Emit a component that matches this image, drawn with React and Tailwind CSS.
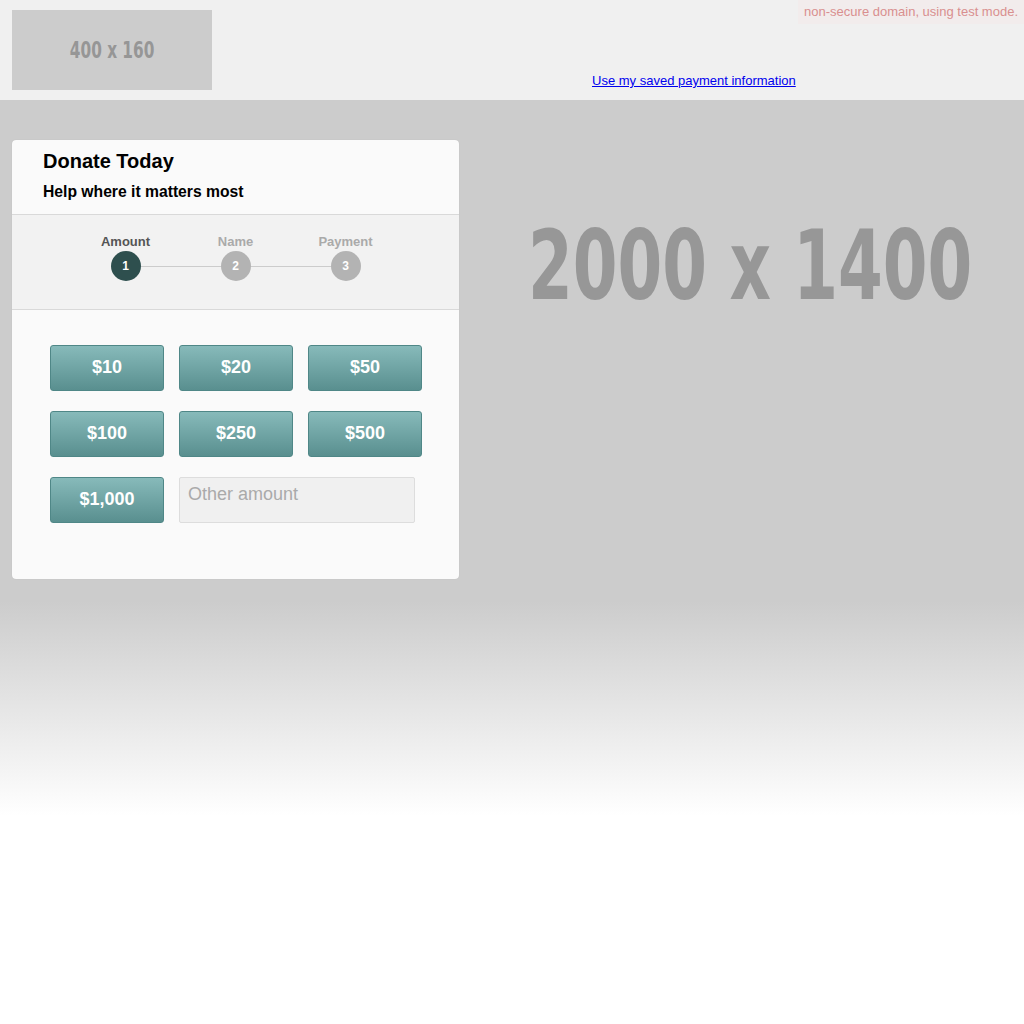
import { useState } from 'react'

const amounts = ['$10', '$20', '$50', '$100', '$250', '$500', '$1,000']
const steps = ['Amount', 'Name', 'Payment']

export default function App() {
  const [other, setOther] = useState('')
  const step = 0

  return (
    <div className="min-h-screen bg-white font-['Liberation_Sans',Arial,sans-serif]">

      {/* Header */}
      <header className="relative h-[100px] bg-[#f0f0f0] flex items-start">
        <div className="ml-3 mt-[10px] w-[200px] h-[80px] bg-[#cccccc] flex items-center justify-center">
          <span className="inline-block scale-x-[0.74] whitespace-nowrap text-[23px] leading-[28px] font-bold text-[#969696] font-['DejaVu_Sans_Condensed',sans-serif]">400 x 160</span>
        </div>
        <a href="#" className="ml-[380px] mt-[71px] text-[13px] text-[#0000ee] underline">
          Use my saved payment information
        </a>
        <div className="absolute top-0 right-0 px-[6px] py-[4px] bg-[#f2ecec] text-[13px] leading-[16px] text-[#d98f8f]">
          non-secure domain, using test mode.
        </div>
      </header>

      {/* Hero */}
      <main className="h-[716px] bg-[linear-gradient(to_bottom,#cccccc_0%,#cccccc_70%,#ffffff_100%)] flex items-start pt-10 pl-3">
        <div className="w-[447px] shrink-0 bg-[#fafafa] rounded-[4px] shadow-[0_0_1px_rgba(0,0,0,0.15)]">
          <div className="pl-[31px] pt-[9px] pb-[12px] border-b border-[#d9d9d9]">
            <h1 className="text-[20px] leading-[24px] font-bold text-black">Donate Today</h1>
            <h2 className="mt-[9px] text-[15.7px] leading-[20px] font-bold text-black">Help where it matters most</h2>
          </div>

          <div className="bg-[#f2f2f2] border-b border-[#d9d9d9] pt-[19px] pb-[28px]">
            <div className="relative w-[330px] mx-auto grid grid-cols-3">
              <div className="absolute left-[55px] right-[55px] top-[32px] h-px bg-[#cccccc]" />
              {steps.map((s, i) => (
                <div key={s} className="relative flex flex-col items-center">
                  <span className={`text-[13px] leading-[15px] font-bold ${i === step ? 'text-[#555555]' : 'text-[#aaaaaa]'}`}>{s}</span>
                  <span className={`mt-[2px] w-[30px] h-[30px] rounded-full flex items-center justify-center text-[12px] font-bold text-white ${i === step ? 'bg-[#2e4f4e]' : 'bg-[#b3b3b3]'}`}>
                    {i + 1}
                  </span>
                </div>
              ))}
            </div>
          </div>

          <div className="pl-[38px] pt-[35px] pb-[56px] grid grid-cols-[114px_114px_114px] gap-x-[15px] gap-y-[20px]">
            {amounts.map(a => (
              <button
                key={a}
                className="h-[46px] pb-[2px] rounded-[3px] border border-[#4f8787] bg-[linear-gradient(to_bottom,#87baba,#598f8f)] text-white text-[18px] font-bold"
              >
                {a}
              </button>
            ))}
            <input
              value={other}
              onChange={e => setOther(e.target.value)}
              placeholder="Other amount"
              className="col-span-2 w-[236px] h-[46px] px-[8px] pb-[12px] bg-[#f0f0f0] border border-[#dddddd] rounded-[2px] text-[18px] text-[#333] placeholder-[#aaaaaa] outline-none"
            />
          </div>
        </div>

        <div className="flex-1 pt-[76px] pl-[69px]">
          <span className="inline-block origin-top scale-y-[1.343] whitespace-nowrap text-[71.5px] leading-[75px] font-bold text-[#979797] font-['DejaVu_Sans_Condensed',sans-serif]">
            2000 x 1400
          </span>
        </div>
      </main>
    </div>
  )
}
